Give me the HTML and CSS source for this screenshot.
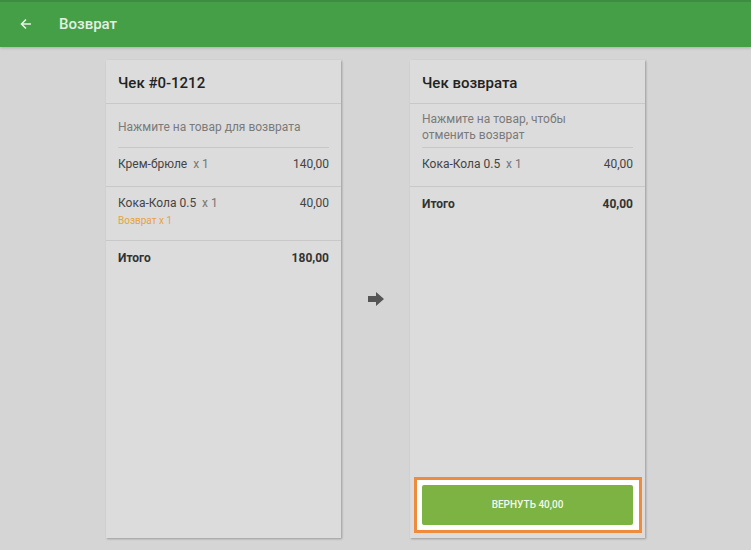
FILE: index.html
```html
<!DOCTYPE html>
<html lang="ru">
<head>
    <meta charset="UTF-8">
    <meta name="viewport" content="width=device-width, initial-scale=1.0">
    <title>Возврат</title>
    <link rel="stylesheet" href="styles.css">
</head>
<body>
    <header class="topbar">
        <svg class="back" width="12" height="12" viewBox="0 0 12 12">
            <path d="M11 6H2M6 1.5L1.5 6 6 10.5" fill="none" stroke="#e6f3e6" stroke-width="1.6"/>
        </svg>
        <span class="topbar-title">Возврат</span>
    </header>
    <main class="content">
        <section class="card">
            <div class="card-title">Чек #0-1212</div>
            <div class="hint">Нажмите на товар для возврата</div>
            <div class="item">
                <div class="line">
                    <span>Крем-брюле <span class="qty">x 1</span></span>
                    <span>140,00</span>
                </div>
            </div>
            <div class="item">
                <div class="line">
                    <span>Кока-Кола 0.5 <span class="qty">x 1</span></span>
                    <span>40,00</span>
                </div>
                <div class="returned">Возврат x 1</div>
            </div>
            <div class="item total">
                <div class="line">
                    <span>Итого</span>
                    <span>180,00</span>
                </div>
            </div>
        </section>

        <div class="arrow">
            <svg width="16" height="14" viewBox="0 0 16 14">
                <polygon points="0,4 8,4 8,0 16,7 8,14 8,10 0,10" fill="#555"/>
            </svg>
        </div>

        <section class="card">
            <div class="card-title">Чек возврата</div>
            <div class="hint">Нажмите на товар, чтобы<br>отменить возврат</div>
            <div class="item">
                <div class="line">
                    <span>Кока-Кола 0.5 <span class="qty">x 1</span></span>
                    <span>40,00</span>
                </div>
            </div>
            <div class="item total">
                <div class="line">
                    <span>Итого</span>
                    <span>40,00</span>
                </div>
            </div>
            <div class="footer">
                <button class="refund">ВЕРНУТЬ 40,00</button>
            </div>
        </section>
    </main>
</body>
</html>
```

FILE: styles.css
```css
body {
    margin: 0;
    font-family: Roboto, 'Noto Sans', sans-serif;
    background: #d5d5d5;
    color: #444;
    height: 550px;
    display: flex;
    flex-direction: column;
    overflow: hidden;
}
.topbar {
    height: 47px;
    flex-shrink: 0;
    background: #449f46;
    border-top: 2px solid #3c8d3f;
    box-sizing: border-box;
    display: flex;
    align-items: center;
    padding-left: 20px;
    box-shadow: 0 1px 3px rgba(0, 0, 0, 0.2);
    position: relative;
}
.back {
    margin-right: 27px;
    margin-top: -1px;
}
.topbar-title {
    color: #e2f0e2;
    font-size: 15px;
    font-weight: 500;
    margin-top: -1px;
}
.content {
    flex: 1;
    display: flex;
    justify-content: center;
    align-items: center;
}
.card {
    width: 235px;
    height: 478px;
    background: #dcdcdc;
    box-shadow: 1px 1px 2px rgba(0, 0, 0, 0.28);
    display: flex;
    flex-direction: column;
    box-sizing: border-box;
}
.card-title {
    height: 44px;
    box-sizing: border-box;
    padding: 14px 12px 0;
    font-size: 15px;
    font-weight: 500;
    color: #222;
    border-bottom: 1px solid #c8c8c8;
}
.hint {
    height: 44px;
    box-sizing: border-box;
    margin: 0 12px;
    padding-top: 3px;
    display: flex;
    align-items: center;
    font-size: 12px;
    line-height: 16px;
    color: #7a7a7a;
    border-bottom: 1px solid #c8c8c8;
}
.item {
    padding: 9px 12px 15px;
    font-size: 12px;
    line-height: 14px;
    border-bottom: 1px solid #c8c8c8;
}
.line {
    display: flex;
    justify-content: space-between;
}
.qty {
    color: #777;
    margin-left: 3px;
}
.returned {
    margin-top: 5px;
    margin-bottom: -2px;
    font-size: 10px;
    line-height: 12px;
    color: #e7a23f;
}
.total {
    border-bottom: none;
    padding-top: 10px;
    font-weight: 700;
    color: #333;
}
.footer {
    margin: auto 3px 5px 4px;
    border: 3px solid #ee8b3c;
    background: #ffffff;
    padding: 5px 6px 5px 5px;
}
.refund {
    display: block;
    width: 100%;
    height: 40px;
    border: none;
    border-radius: 2px;
    background: #7cb342;
    color: #f4f9ee;
    font-family: Roboto, 'Noto Sans', sans-serif;
    font-size: 10px;
    font-weight: 500;
}
.arrow {
    width: 69px;
    display: flex;
    justify-content: center;
}
```
